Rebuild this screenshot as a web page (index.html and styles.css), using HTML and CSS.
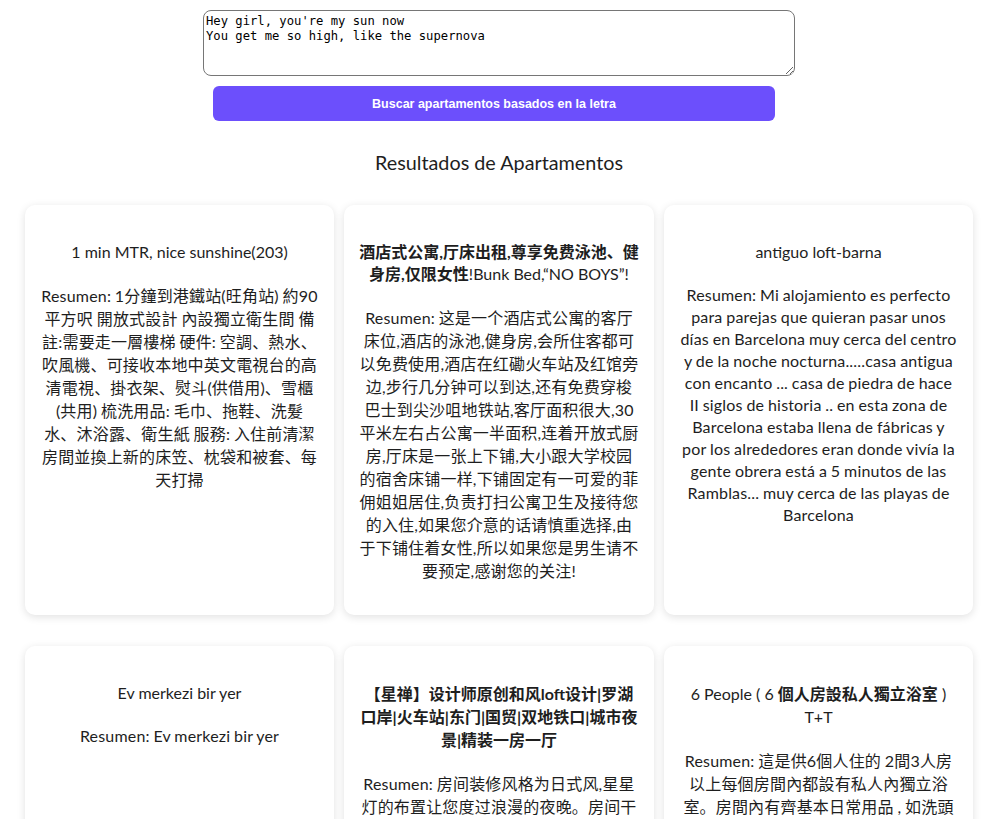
FILE: index.html
```html
<!DOCTYPE html>
<html lang="es">
<head>
<meta charset="utf-8">
<title>Resultados de Apartamentos</title>
<link rel="stylesheet" href="styles.css">
</head>
<body>
<div class="page">
  <form class="search">
    <textarea class="lyrics" rows="4">Hey girl, you're my sun now
You get me so high, like the supernova</textarea>
    <button type="button" class="btn">Buscar apartamentos basados en la letra</button>
  </form>
  <h2 class="heading">Resultados de Apartamentos</h2>
  <div class="grid">
    <div class="card">
      <h3 class="title">1 min MTR, nice sunshine(203)</h3>
      <p class="summary cjk">Resumen: 1分鐘到港鐵站(旺角站) 約90平方呎 開放式設計 內設獨立衛生間 備註:需要走一層樓梯 硬件: 空調、熱水、吹風機、可接收本地中英文電視台的高清電視、掛衣架、熨斗(供借用)、雪櫃(共用) 梳洗用品: 毛巾、拖鞋、洗髮水、沐浴露、衛生紙 服務: 入住前清潔房間並換上新的床笠、枕袋和被套、每天打掃</p>
    </div>
    <div class="card">
      <h3 class="title"><b class="zh">酒店式公寓,厅床出租,尊享免费泳池、健身房,仅限女性</b>!Bunk Bed,“NO BOYS”!</h3>
      <p class="summary cjk">Resumen: 这是一个酒店式公寓的客厅床位,酒店的泳池,健身房,会所住客都可以免费使用,酒店在红磡火车站及红馆旁边,步行几分钟可以到达,还有免费穿梭巴士到尖沙咀地铁站,客厅面积很大,30平米左右占公寓一半面积,连着开放式厨房,厅床是一张上下铺,大小跟大学校园的宿舍床铺一样,下铺固定有一可爱的菲佣姐姐居住,负责打扫公寓卫生及接待您的入住,如果您介意的话请慎重选择,由于下铺住着女性,所以如果您是男生请不要预定,感谢您的关注!</p>
    </div>
    <div class="card">
      <h3 class="title">antiguo loft-barna</h3>
      <p class="summary">Resumen: Mi alojamiento es perfecto para parejas que quieran pasar unos días en Barcelona muy cerca del centro y de la noche nocturna.....casa antigua con encanto ... casa de piedra de hace II siglos de historia .. en esta zona de Barcelona estaba llena de fábricas y por los alrededores eran donde vivía la gente obrera está a 5 minutos de las Ramblas... muy cerca de las playas de Barcelona</p>
    </div>
    <div class="card">
      <h3 class="title">Ev merkezi bir yer</h3>
      <p class="summary">Resumen: Ev merkezi bir yer</p>
    </div>
    <div class="card">
      <h3 class="title cjk"><b class="zh">【星禅】设计师原创和风loft设计|罗湖口岸|火车站|东门|国贸|双地铁口|城市夜景|精装一房一厅</b></h3>
      <p class="summary cjk">Resumen: 房间装修风格为日式风,星星灯的布置让您度过浪漫的夜晚。房间干净整洁,床品每客一换,步行即可到达罗湖口岸、火车站和东门商圈,交通非常便利。</p>
    </div>
    <div class="card">
      <h3 class="title cjk">6 People ( 6 <b class="zh">個人房設私人獨立浴室</b> ) T+T</h3>
      <p class="summary cjk">Resumen: 這是供6個人住的 2間3人房以上每個房間內都設有私人內獨立浴室。房間內有齊基本日常用品 , 如洗頭水、沐浴露、毛巾及風筒等,歡迎入住。</p>
    </div>
  </div>
</div>
</body>
</html>
```

FILE: styles.css
```css
html, body {
  margin: 0;
  padding: 0;
  background: #ffffff;
}

body {
  font-family: Lato, "Noto Sans CJK SC", sans-serif;
  color: #1e1e1e;
}

.page {
  width: 948px;
  padding: 10px 16px 40px 25px;
}

.search {
  display: flex;
  flex-direction: column;
  margin: 0;
}

.lyrics {
  display: block;
  box-sizing: border-box;
  width: 592px;
  height: 66px;
  margin: 0 0 0 178px;
  padding: 3px 2px 2px;
  border: 1px solid #767676;
  border-radius: 8px;
  font-family: "DejaVu Sans Mono", "Liberation Mono", monospace;
  font-size: 12.2px;
  line-height: 15px;
  color: #000;
  resize: vertical;
}

.btn {
  display: block;
  width: 562px;
  height: 35px;
  margin: 10px 0 0 188px;
  border: none;
  border-radius: 6px;
  background: #6c4ffc;
  color: #ffffff;
  font-family: "Liberation Sans", Arial, sans-serif;
  font-size: 12.5px;
  font-weight: 600;
  cursor: pointer;
}

.heading {
  margin: 28px 0 30px;
  text-align: center;
  font-size: 19.8px;
  font-weight: 400;
  line-height: 26px;
  color: #1e1e1e;
}

.grid {
  display: grid;
  grid-template-columns: 309px 310px 309px;
  column-gap: 10px;
  row-gap: 31px;
}

.card {
  background: #ffffff;
  border-radius: 10px;
  box-shadow: 0 2px 8px rgba(0, 0, 0, 0.12);
  padding: 15px 15px 17px;
  text-align: center;
}

.title {
  margin: 21px 0 21px;
  font-size: 16px;
  font-weight: 400;
  line-height: 22px;
  color: #1e1e1e;
}

.zh {
  font-weight: 700;
}

.summary {
  margin: 0 0 16px;
  font-size: 16px;
  line-height: 22px;
  letter-spacing: 0.18px;
  word-spacing: -0.5px;
}

.title.cjk,
.summary.cjk {
  line-height: 23px;
}
```
